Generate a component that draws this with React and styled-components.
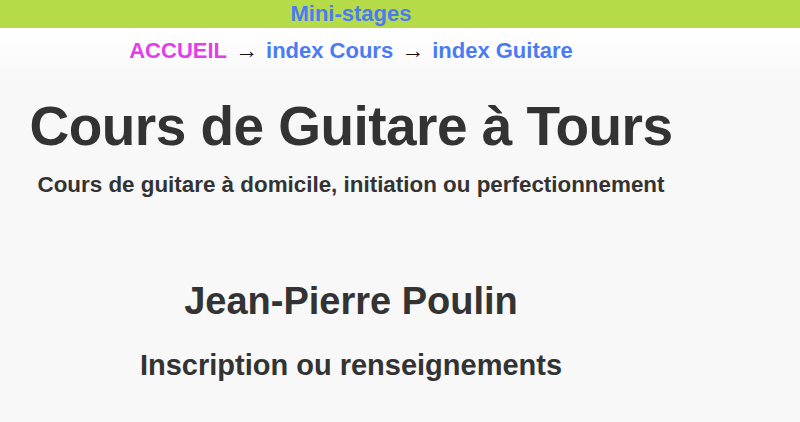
import React from "react";
import styled, { createGlobalStyle } from "styled-components";

const Global = createGlobalStyle`
  html, body {
    margin: 0;
    padding: 0;
  }
  body {
    min-height: 422px;
    font-family: "Liberation Sans", Arial, Helvetica, sans-serif;
    background: linear-gradient(to bottom, #ffffff 0px, #ffffff 30px, #f8f8f8 80px, #f8f8f8 100%);
    color: #333333;
  }
`;

const TopBar = styled.header`
  background: #b5db48;
  height: 28px;
`;

const Column = styled.div`
  width: 702px;
  text-align: center;
`;

const TopLink = styled.a`
  display: block;
  font-size: 22px;
  font-weight: bold;
  line-height: 28px;
  color: #4b7bf3;
  text-decoration: none;
`;

const Breadcrumb = styled.nav`
  margin-top: 7px;
  font-size: 22px;
  font-weight: bold;
  line-height: 30px;
`;

const Crumb = styled.a`
  color: ${(p) => (p.$home ? "#e33fe9" : "#4b7bf3")};
  text-decoration: none;
`;

const Arrow = styled.span`
  display: inline-block;
  color: #111111;
  font-size: 23px;
  margin: 0 8px;
`;

const Title = styled.h1`
  margin: 30px 0 0;
  font-size: 55px;
  line-height: 60px;
  letter-spacing: -0.55px;
  font-weight: bold;
  color: #333333;
`;

const Subtitle = styled.h2`
  margin: 15px 0 0;
  font-size: 22.4px;
  line-height: 28px;
  font-weight: bold;
  color: #333333;
`;

const Name = styled.h2`
  margin: 80px 0 0;
  font-size: 38px;
  line-height: 44px;
  font-weight: bold;
  color: #333333;
`;

const Contact = styled.h3`
  margin: 25px 0 0;
  font-size: 29px;
  line-height: 34px;
  font-weight: bold;
  color: #333333;
`;

export default function App() {
  return (
    <>
      <Global />
      <TopBar>
        <Column>
          <TopLink href="#">Mini-stages</TopLink>
        </Column>
      </TopBar>
      <Column as="main">
        <Breadcrumb>
          <Crumb $home href="#">ACCUEIL</Crumb>
          <Arrow>→</Arrow>
          <Crumb href="#">index Cours</Crumb>
          <Arrow>→</Arrow>
          <Crumb href="#">index Guitare</Crumb>
        </Breadcrumb>
        <Title>Cours de Guitare à Tours</Title>
        <Subtitle>Cours de guitare à domicile, initiation ou perfectionnement</Subtitle>
        <Name>Jean-Pierre Poulin</Name>
        <Contact>Inscription ou renseignements</Contact>
      </Column>
    </>
  );
}
